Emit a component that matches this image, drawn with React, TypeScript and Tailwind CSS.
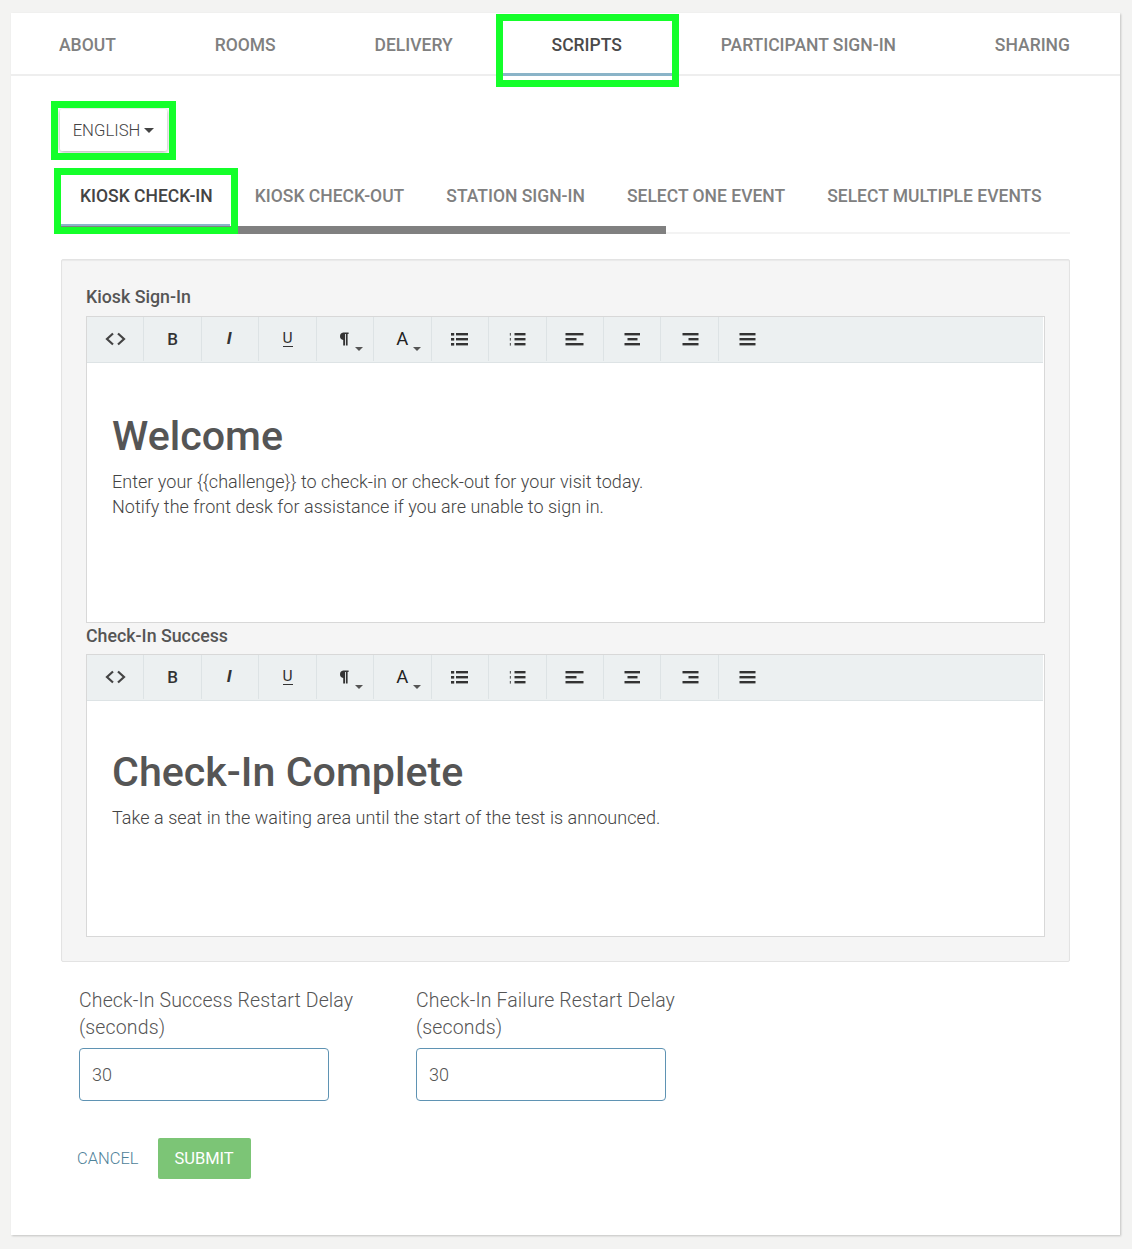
import { ReactNode } from 'react'

const mainTabs = ['ABOUT', 'ROOMS', 'DELIVERY', 'SCRIPTS', 'PARTICIPANT SIGN-IN', 'SHARING']
const subTabs = ['KIOSK CHECK-IN', 'KIOSK CHECK-OUT', 'STATION SIGN-IN', 'SELECT ONE EVENT', 'SELECT MULTIPLE EVENTS']

function Caret() {
  return <span className="absolute bottom-[10px] right-[10px] h-0 w-0 border-x-[4px] border-t-[4px] border-x-transparent border-t-[#555]" />
}

function Bars({ rows }: { rows: [number, number][] }) {
  return (
    <svg width="20" height="14" viewBox="0 0 20 14" className="text-[#333]">
      {rows.map(([x, w], i) => (
        <rect key={i} x={x} y={1 + i * 5} width={w} height="2.4" fill="currentColor" />
      ))}
    </svg>
  )
}

function ListIcon({ small }: { small?: boolean }) {
  return (
    <svg width="17" height="14" viewBox="0 0 17 14" className="text-[#333]">
      {[0, 1, 2].map((i) => (
        <g key={i}>
          <rect x={small ? 0.8 : 0} y={1 + i * 5} width={small ? 1.2 : 3.2} height="2.6" fill="currentColor" opacity={small ? 0.75 : 1} />
          <rect x={small ? 5.5 : 5} y={1 + i * 5} width={small ? 11 : 12} height="2.4" fill="currentColor" />
        </g>
      ))}
    </svg>
  )
}

const toolbar: ReactNode[] = [
  <svg key="code" width="21" height="14" viewBox="0 0 21 14" fill="none" stroke="#444" strokeWidth="2.2">
    <path d="M8 1.5 2 7l6 5.5M13 1.5 19 7l-6 5.5" />
  </svg>,
  <span key="b" className="translate-y-[1px] text-[17px] font-medium text-[#333]">B</span>,
  <span key="i" className="relative -left-[1px] text-[17px] font-bold italic text-[#333] font-['Liberation_Sans',sans-serif]">I</span>,
  <span key="u" className="text-[15.5px] leading-[15px] font-normal text-[#333] border-b-[1.5px] border-[#333]">U</span>,
  <svg key="p" width="10" height="14" viewBox="0 0 10 14" className="relative -left-[1px] text-[#333]">
    <path d="M4.2 0.5H9.6V2H8.6V13.5H6.9V2H6V13.5H4.2V8A3.8 3.8 0 0 1 4.2 0.5Z" fill="currentColor" />
  </svg>,
  <span key="a" className="translate-y-[1px] text-[18.5px] font-normal text-[#222]">A</span>,
  <ListIcon key="ul" />,
  <ListIcon key="ol" small />,
  <Bars key="left" rows={[[0.5, 18], [0.5, 11], [0.5, 18]]} />,
  <Bars key="center" rows={[[2.5, 15.5], [5.5, 10], [2.5, 15.5]]} />,
  <Bars key="right" rows={[[2.5, 16], [8.5, 10], [2.5, 16]]} />,
  <Bars key="full" rows={[[1.5, 16], [1.5, 16], [1.5, 16]]} />,
]

function Editor({ height, children }: { height: string; children: ReactNode }) {
  return (
    <div className={`border border-[#d8d8d8] bg-white ${height}`}>
      <div className="mr-[1px] flex h-[46px] border-b border-[#dde3e5] bg-[#ecf0f1]">
        {toolbar.map((icon, i) => (
          <div key={i} className="relative flex h-[44px] w-[57.45px] shrink-0 items-center justify-center border-r border-[#dde3e5] last:border-r-0">
            {icon}
            {(i === 4 || i === 5) && <Caret />}
          </div>
        ))}
      </div>
      {children}
    </div>
  )
}

function DelayField({ label }: { label: string }) {
  return (
    <div className="w-[250px]">
      <label className="block w-[300px] text-[19.5px] leading-[27px] tracking-[0.13px] font-light text-[#555]">{label}</label>
      <input
        readOnly
        value="30"
        className="mt-[7px] block h-[53px] w-[250px] rounded-[4px] border border-[#5f93b3] px-3 text-[18px] font-light text-[#555] outline-none"
      />
    </div>
  )
}

export default function App() {
  return (
    <div className="min-h-[1249px] bg-[#f3f3f2] px-[11px] pt-[13px] pb-[14px] font-['Roboto',sans-serif]">
      <div className="h-[1222px] w-[1109px] bg-white shadow-[1px_1px_2px_rgba(0,0,0,0.2)]">
        {/* Main tabs */}
        <div className="flex h-[63px] justify-between border-b-2 border-[#eeeeee] px-[48px] pr-[50px]">
          {mainTabs.map((tab) => (
            <div key={tab} className={`relative pt-[22px] text-[17.5px] leading-[20px] font-medium ${tab === 'SCRIPTS' ? 'text-[#4a4a4a]' : 'text-[#808080]'}`}>
              {tab}
              {tab === 'SCRIPTS' && (
                <>
                  <span className="absolute -left-[49px] -right-[52px] top-[60px] h-[3px] bg-[#8ab4c8]" />
                  <span className="absolute -left-[56px] -right-[57px] top-[1px] h-[73px] border-[7px] border-[#14ff2a]" />
                </>
              )}
            </div>
          ))}
        </div>

        {/* Language */}
        <div className="relative ml-[48px] mt-[33px] h-[43px] w-[109px]">
          <button className="ml-[1px] mt-[1px] flex h-[42px] w-[107px] items-center justify-center rounded-[2px] bg-white pt-[1px] text-[16.7px] font-light text-[#444] shadow-[0_1px_4px_rgba(0,0,0,0.35)]">
            ENGLISH
            <span className="ml-[4px] h-0 w-0 border-x-[5px] border-t-[5px] border-x-transparent border-t-[#444]" />
          </button>
          <span className="absolute -left-[8px] -top-[8px] h-[59px] w-[125px] border-[7px] border-[#14ff2a]" />
        </div>

        {/* Script tabs */}
        <div className="relative ml-[48px] mt-[16px] h-[66px] w-[1011px]">
          <div className="flex">
            {subTabs.map((tab, i) => (
              <div key={tab} className={`px-[21px] pt-[18px] text-[17.5px] leading-[20px] font-medium whitespace-nowrap ${i === 0 ? 'text-[#444]' : 'text-[#808080]'}`}>
                {tab}
              </div>
            ))}
          </div>
          <div className="absolute bottom-0 left-0 h-[2px] w-full bg-[#f3f3f3]" />
          <div className="absolute bottom-0 left-0 h-[8px] w-[607px] bg-[#808080]" />
          <div className="absolute bottom-[8px] left-[1px] h-[2px] w-[170px] bg-[#8ab4c8]" />
          <span className="absolute -left-[5px] top-0 h-[66px] w-[184px] border-[7px] border-[#14ff2a]" />
        </div>

        {/* Editors */}
        <div className="ml-[50px] mt-[25px] h-[703px] w-[1009px] rounded-[2px] border border-[#e3e3e3] bg-[#f5f5f5] px-[24px] pt-[26px] shadow-[inset_0_1px_1px_rgba(0,0,0,0.05)]">
          <h3 className="text-[17.8px] leading-[22px] font-medium text-[#555]">Kiosk Sign-In</h3>
          <div className="mt-[8px]">
            <Editor height="h-[307px]">
              <div className="px-[25px] pt-[48px]">
                <h1 className="text-[41.2px] leading-[50px] font-medium text-[#555]">Welcome</h1>
                <p className="mt-[8px] text-[18px] leading-[25px] tracking-[0.03px] font-light text-[#444]">
                  Enter your {'{{challenge}}'} to check-in or check-out for your visit today.
                  <br />
                  Notify the front desk for assistance if you are unable to sign in.
                </p>
              </div>
            </Editor>
          </div>
          <h3 className="mt-[2px] text-[17.8px] leading-[22px] font-medium text-[#555]">Check-In Success</h3>
          <div className="mt-[7px]">
            <Editor height="h-[283px]">
              <div className="px-[25px] pt-[46px]">
                <h1 className="text-[41.2px] leading-[50px] font-medium text-[#555]">Check-In Complete</h1>
                <p className="mt-[8px] text-[18px] leading-[25px] tracking-[0.05px] font-light text-[#444]">
                  Take a seat in the waiting area until the start of the test is announced.
                </p>
              </div>
            </Editor>
          </div>
        </div>

        {/* Delay fields */}
        <div className="ml-[68px] mt-[25px] flex gap-[87px]">
          <DelayField label="Check-In Success Restart Delay (seconds)" />
          <DelayField label="Check-In Failure Restart Delay (seconds)" />
        </div>

        {/* Actions */}
        <div className="ml-[66px] mt-[37px] flex items-center">
          <a className="pt-[1px] text-[16.5px] font-light text-[#4f8299]">CANCEL</a>
          <button className="ml-[19px] h-[41px] w-[93px] rounded-[2px] bg-[#7cc576] pt-[1px] text-[16.5px] text-white">SUBMIT</button>
        </div>
      </div>
    </div>
  )
}
